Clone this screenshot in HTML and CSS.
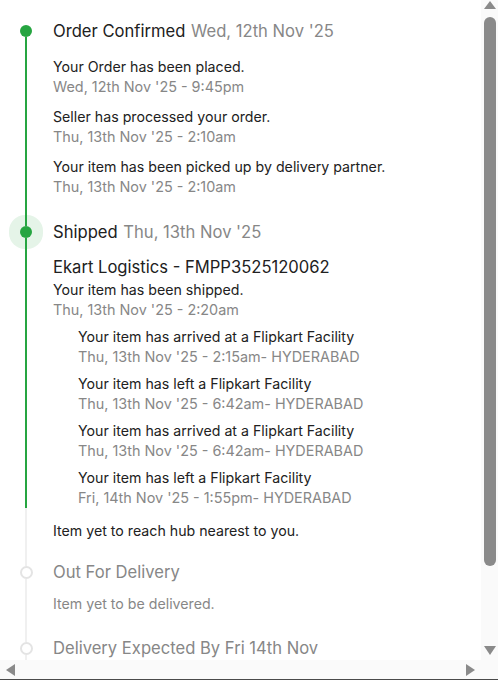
FILE: index.html
```html
<!DOCTYPE html>
<html lang="en">
<head>
    <meta charset="UTF-8">
    <meta name="viewport" content="width=device-width, initial-scale=1.0">
    <title>Order Tracking</title>
    <link rel="stylesheet" href="styles.css">
</head>
<body>
    <div class="frame">
        <div class="tracker">
            <div class="timeline">
                <!-- order confirmed -->
                <div class="rail first done">
                    <span class="seg top"></span>
                    <span class="dot"></span>
                    <span class="seg fill"></span>
                </div>
                <div class="stage stage-confirmed">
                    <div class="stage-title">Order Confirmed <span class="stage-date">Wed, 12th Nov '25</span></div>
                    <div class="event">
                        <div class="event-text">Your Order has been placed.</div>
                        <div class="event-time">Wed, 12th Nov '25 - 9:45pm</div>
                    </div>
                    <div class="event">
                        <div class="event-text">Seller has processed your order.</div>
                        <div class="event-time">Thu, 13th Nov '25 - 2:10am</div>
                    </div>
                    <div class="event">
                        <div class="event-text">Your item has been picked up by delivery partner.</div>
                        <div class="event-time">Thu, 13th Nov '25 - 2:10am</div>
                    </div>
                </div>

                <!-- shipped -->
                <div class="rail done current">
                    <span class="seg top"></span>
                    <span class="dot"></span>
                    <span class="seg fill"></span>
                </div>
                <div class="stage stage-shipped">
                    <div class="stage-title">Shipped <span class="stage-date">Thu, 13th Nov '25</span></div>
                    <div class="courier">Ekart Logistics - FMPP3525120062</div>
                    <div class="event-text">Your item has been shipped.</div>
                    <div class="event-time">Thu, 13th Nov '25 - 2:20am</div>
                    <div class="hops">
                        <div class="hop">
                            <div class="event-text">Your item has arrived at a Flipkart Facility</div>
                            <div class="event-time">Thu, 13th Nov '25 - 2:15am- HYDERABAD</div>
                        </div>
                        <div class="hop">
                            <div class="event-text">Your item has left a Flipkart Facility</div>
                            <div class="event-time">Thu, 13th Nov '25 - 6:42am- HYDERABAD</div>
                        </div>
                        <div class="hop">
                            <div class="event-text">Your item has arrived at a Flipkart Facility</div>
                            <div class="event-time">Thu, 13th Nov '25 - 6:42am- HYDERABAD</div>
                        </div>
                        <div class="hop">
                            <div class="event-text">Your item has left a Flipkart Facility</div>
                            <div class="event-time">Fri, 14th Nov '25 - 1:55pm- HYDERABAD</div>
                        </div>
                    </div>
                </div>

                <div class="rail">
                    <span class="seg fill"></span>
                </div>
                <div class="stage stage-note">
                    <div class="event-text">Item yet to reach hub nearest to you.</div>
                </div>

                <!-- pending -->
                <div class="rail">
                    <span class="seg top"></span>
                    <span class="dot"></span>
                    <span class="seg fill"></span>
                </div>
                <div class="stage stage-pending">
                    <div class="stage-title">Out For Delivery</div>
                    <div class="pending-note">Item yet to be delivered.</div>
                </div>

                <div class="rail last">
                    <span class="seg top"></span>
                    <span class="dot"></span>
                    <span class="seg fill"></span>
                </div>
                <div class="stage stage-last">
                    <div class="stage-title">Delivery Expected By Fri 14th Nov</div>
                </div>
            </div>
        </div>

        <!-- scrollbars -->
        <div class="vscroll">
            <svg class="arrow-up" width="12" height="8" viewBox="0 0 12 8"><polygon points="6,0 12,8 0,8" fill="#8a8a8a"/></svg>
            <div class="thumb"></div>
            <svg class="arrow-down" width="12" height="9" viewBox="0 0 12 9"><polygon points="0,0 12,0 6,9" fill="#8a8a8a"/></svg>
        </div>
        <div class="hscroll">
            <svg width="9" height="12" viewBox="0 0 9 12"><polygon points="9,0 9,12 0,6" fill="#8a8a8a"/></svg>
            <svg width="9" height="12" viewBox="0 0 9 12"><polygon points="0,0 9,6 0,12" fill="#8a8a8a"/></svg>
        </div>
        <div class="corner"></div>
    </div>
</body>
</html>
```

FILE: styles.css
```css
body { margin: 0; font-family: Inter, "Noto Sans", sans-serif; color: #212121; background: #fff; }
.frame { display: grid; grid-template-columns: 1fr 17px; grid-template-rows: 660px 19px; border-bottom: 1px solid #4a4a4a; }
.tracker { overflow: hidden; background: #fff; }
.timeline { display: grid; grid-template-columns: 53px 1fr; padding-top: 19px; }

.rail { display: flex; flex-direction: column; align-items: center; padding-right: 1px; }
.rail .seg { width: 2px; background: #f0f0f0; }
.rail .seg.top { height: 6px; flex: none; }
.rail .seg.fill { flex: 1; }
.rail.first .seg.top { background: transparent; }
.rail.done .seg { background: #26a541; }
.rail .dot { width: 9px; height: 9px; border: 2px solid #e4e4e4; border-radius: 50%; background: #fff; flex: none; }
.rail.done .dot { width: 12px; height: 12px; border: none; background: #26a541; }
.rail.current .dot { box-shadow: 0 0 0 11px rgba(38, 165, 65, 0.12); }

.stage-title { font-size: 16.6px; line-height: 24px; }
.stage-date { color: #878787; margin-left: 1px; }
.event-text { font-size: 14.2px; line-height: 20px; }
.event-time { font-size: 14.4px; line-height: 20px; color: #878787; }

.stage-confirmed { padding-bottom: 23px; }
.stage-confirmed .stage-title { margin-bottom: 4px; }
.event { padding-top: 10px; }

.courier { font-size: 16.6px; line-height: 22px; margin-top: 12px; margin-bottom: 2px; }
.hops { padding-left: 25px; padding-top: 7px; }
.hop + .hop { margin-top: 7px; }

.stage-note { padding: 13px 0 19px; }

.stage-pending .stage-title, .stage-last .stage-title { color: #878787; }
.stage-pending { padding-bottom: 23px; }
.pending-note { font-size: 14.2px; line-height: 18px; color: #878787; margin-top: 11px; }
.stage-last { padding-bottom: 105px; }

.vscroll { background: #fafafa; display: flex; flex-direction: column; align-items: center; padding-top: 1px; }
.vscroll .thumb { width: 12px; height: 549px; margin-top: 8px; border-radius: 6px; background: #8a8a8a; }
.vscroll .arrow-down { margin-top: auto; margin-bottom: 5px; }
.hscroll { background: #fafafa; display: flex; justify-content: space-between; align-items: flex-start; padding: 4px 6px 0; }
.corner { background: #fafafa; }
```
